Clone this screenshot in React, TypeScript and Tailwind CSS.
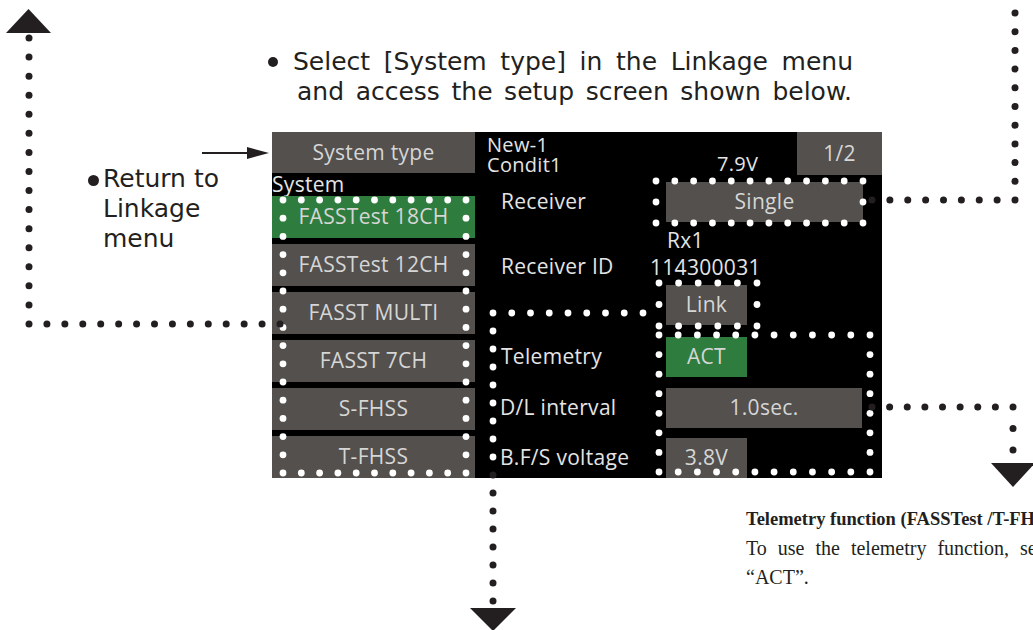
import React from "react";

type Pt = [number, number];

// dots placed evenly along a polyline, `steps` gaps per segment
function track(pts: Pt[], steps: number[]): Pt[] {
  const out: Pt[] = [pts[0]];
  for (let i = 1; i < pts.length; i++) {
    const [ax, ay] = pts[i - 1];
    const [bx, by] = pts[i];
    const n = steps[i - 1];
    for (let k = 1; k <= n; k++) out.push([ax + ((bx - ax) * k) / n, ay + ((by - ay) * k) / n]);
  }
  return out;
}

function box(x1: number, y1: number, x2: number, y2: number, nx: number, ny: number): Pt[] {
  return track(
    [
      [x1, y1],
      [x2, y1],
      [x2, y2],
      [x1, y2],
      [x1, y1],
    ],
    [nx, ny, nx, ny]
  ).slice(0, -1);
}

const whiteDots: Pt[] = [
  ...box(283, 200, 466, 473, 10, 15),
  ...track([[643, 313], [493, 313], [493, 457]], [8, 8]),
  ...box(656, 181, 863, 223, 11, 2),
  ...box(659, 283, 757, 326, 5, 2),
  ...box(659, 335, 870, 472, 11, 7),
];

const blackDots: Pt[] = [
  ...track([[29, 38], [29, 324], [280, 324]], [15, 14]),
  ...track([[493, 475], [493, 601]], [7]),
  ...track([[872, 200], [1015, 200], [1015, 13]], [8, 10]),
  ...track([[872, 407], [1013, 407], [1013, 450]], [8, 2]),
];

const systems = ["FASSTest 18CH", "FASSTest 12CH", "FASST MULTI", "FASST 7CH", "S-FHSS", "T-FHSS"];

function Annotations() {
  return (
    <svg className="pointer-events-none absolute inset-0" width={1033} height={630} viewBox="0 0 1033 630">
      {whiteDots.map(([x, y], i) => (
        <circle key={"w" + i} cx={x} cy={y} r={3.4} fill="#ffffff" />
      ))}
      {blackDots.map(([x, y], i) => (
        <circle key={"b" + i} cx={x} cy={y} r={3.5} fill="#231f20" />
      ))}
      <polygon points="6,33 51,33 28.5,9" fill="#231f20" />
      <polygon points="470,608 516,608 493,631" fill="#231f20" />
      <polygon points="991,463 1035,463 1013,487" fill="#231f20" />
      <line x1={202} y1={153} x2={250} y2={153} stroke="#231f20" strokeWidth={2} />
      <polygon points="247,147 247,159 269,153" fill="#231f20" />
    </svg>
  );
}

function Btn({ children, className = "" }: { children: React.ReactNode; className?: string }) {
  return <div className={`flex items-center justify-center text-[#d6d6d6] ${className}`}>{children}</div>;
}

function Screen() {
  return (
    <div className="flex h-[346px] w-[610px] overflow-hidden bg-black font-['Open_Sans',sans-serif] text-[21px] tracking-[0.3px] text-[#e4e4e4]">
      {/* system list */}
      <div className="flex w-[203px] flex-col">
        <Btn className="h-[41px] bg-[#53504d]">System type</Btn>
        <div className="h-[23px] leading-[23px]">System</div>
        <div className="flex flex-col gap-[6px]">
          {systems.map((s, i) => (
            <Btn key={s} className={`h-[42px] ${i === 0 ? "bg-[#2f7d3e]" : "bg-[#53504d]"}`}>
              {s}
            </Btn>
          ))}
        </div>
      </div>

      {/* settings */}
      <div className="flex flex-1 flex-col">
        <div className="flex h-[43px]">
          <div className="w-[230px] pl-[12px] pt-[3px] text-[20px] leading-[20px]">
            <div>New-1</div>
            <div>Condit1</div>
          </div>
          <div className="w-[92px] pl-[12px] pt-[22px] text-[20px] leading-[20px]">7.9V</div>
          <Btn className="w-[85px] bg-[#53504d]">1/2</Btn>
        </div>

        <div className="mt-[7px] flex h-[40px] items-center">
          <div className="w-[191px] pl-[26px]">Receiver</div>
          <Btn className="h-[40px] w-[197px] bg-[#53504d]">Single</Btn>
        </div>

        <div className="flex h-[63px] leading-[27px]">
          <div className="w-[191px] pl-[26px] pt-[31px]">Receiver ID</div>
          <div className="pt-[5px]">
            <div className="pl-[1px]">Rx1</div>
            <div className="-ml-[16px]">114300031</div>
          </div>
        </div>

        <div className="flex h-[40px]">
          <div className="w-[191px]" />
          <Btn className="w-[81px] bg-[#53504d]">Link</Btn>
        </div>

        <div className="mt-[12px] flex h-[40px] items-center">
          <div className="w-[191px] pl-[26px]">Telemetry</div>
          <Btn className="h-[40px] w-[81px] bg-[#2f7d3e]">ACT</Btn>
        </div>

        <div className="mt-[11px] flex h-[40px] items-center">
          <div className="w-[191px] pl-[25px]">D/L interval</div>
          <Btn className="h-[40px] w-[196px] bg-[#53504d]">1.0sec.</Btn>
        </div>

        <div className="mt-[10px] flex h-[40px] items-center">
          <div className="w-[191px] pl-[25px]">B.F/S voltage</div>
          <Btn className="h-[40px] w-[81px] bg-[#53504d]">3.8V</Btn>
        </div>
      </div>
    </div>
  );
}

export default function App() {
  return (
    <div className="relative h-[630px] w-[1033px] overflow-hidden bg-white text-[#231f20]">
      {/* instruction */}
      <div className="pl-[268px] pt-[47px] font-['DejaVu_Sans',sans-serif] text-[25px] leading-[30px]">
        <div className="flex items-center">
          <span className="mr-[15px] inline-block h-[10px] w-[10px] rounded-full bg-[#231f20]" />
          <span className="block w-[560px] text-justify [text-align-last:justify]">
            Select [System type] in the Linkage menu
          </span>
        </div>
        <div className="ml-[29px] w-[555px] text-justify [text-align-last:justify]">
          and access the setup screen shown below.
        </div>
      </div>

      <div className="mt-[25px] flex">
        <div className="w-[272px] pl-[88px] pt-[32px] font-['DejaVu_Sans',sans-serif] text-[25px] leading-[30px]">
          <div>
            <span className="mr-[4px] inline-block h-[11px] w-[11px] rounded-full bg-[#231f20] align-[1px]" />
            Return to
          </div>
          <div className="pl-[15px]">Linkage</div>
          <div className="pl-[15px]">menu</div>
        </div>
        <Screen />
      </div>

      {/* telemetry note */}
      <div className="mt-[27px] whitespace-nowrap pl-[746px] font-['Liberation_Serif',serif] text-[20px] leading-[29px]">
        <div className="text-[18.5px] font-bold">Telemetry function (FASSTest /T-FHSS)</div>
        <div className="[word-spacing:6px]">To use the telemetry function, set</div>
        <div>“ACT”.</div>
      </div>

      <Annotations />
    </div>
  );
}
